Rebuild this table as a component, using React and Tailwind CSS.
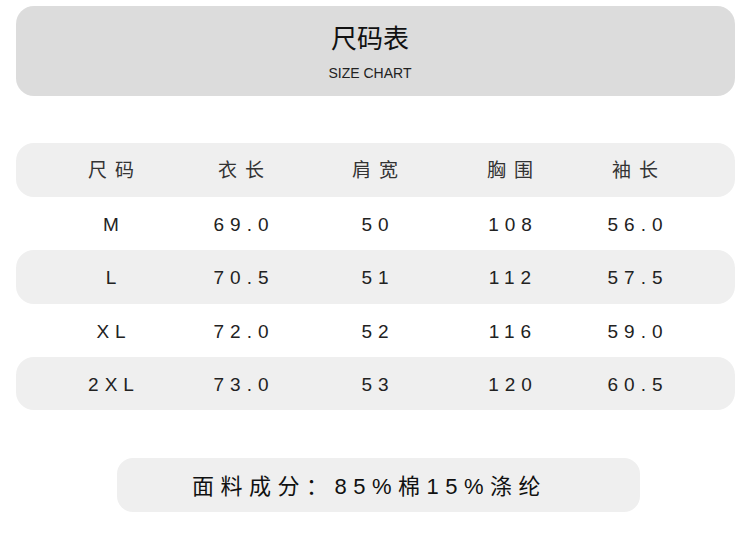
import React from "react";

const cols = ["w-[130px]", "w-[130px]", "w-[138px]", "w-[132px]", "w-[118px]"];
const rows = [
  ["M", "69.0", "50", "108", "56.0"],
  ["L", "70.5", "51", "112", "57.5"],
  ["XL", "72.0", "52", "116", "59.0"],
  ["2XL", "73.0", "53", "120", "60.5"],
];
const heights = ["h-[54px]", "h-[53px]", "h-[54px]", "h-[53px]", "h-[53px]"];

function Row({ cells, gray, head, h }) {
  return (
    <div className={`flex items-center ${h} rounded-[18px] pl-[30px] pt-[3px] ${gray ? "bg-[#efefef]" : ""}`}>
      {cells.map((c, i) => (
        <div key={i} className={`${cols[i]} flex justify-center`}>
          <span
            className={
              head
                ? "text-[19px] tracking-[8px] mr-[-8px] text-[#333]"
                : "text-[19px] tracking-[6px] mr-[-6px] text-[#222]"
            }
          >
            {c}
          </span>
        </div>
      ))}
    </div>
  );
}

export default function App() {
  return (
    <div
      className="w-[750px] h-[534px] bg-white px-[16px] pt-[6px] overflow-hidden"
      style={{ fontFamily: '"Liberation Sans", "Noto Sans CJK SC", sans-serif' }}
    >
      <div className="h-[90px] w-[719px] rounded-[18px] bg-[#dcdcdc] flex flex-col items-center pt-[17px] pr-[11px]">
        <div className="text-[26px] leading-[32px] text-[#111]">尺码表</div>
        <div className="text-[14px] leading-[16px] mt-[10px] text-[#222]">SIZE CHART</div>
      </div>
      <div className="w-[719px] mt-[47px] flex flex-col">
        <Row cells={["尺码", "衣长", "肩宽", "胸围", "袖长"]} gray head h={heights[0]} />
        {rows.map((r, i) => (
          <Row key={i} cells={r} gray={i % 2 === 1} h={heights[i + 1]} />
        ))}
      </div>
      <div className="w-[523px] h-[54px] ml-[101px] mt-[48px] rounded-[16px] bg-[#efefef] flex items-center pl-[75px] pt-[2px]">
        <span className="text-[22px] tracking-[6.5px] text-[#111]">面料成分：85%棉15%涤纶</span>
      </div>
    </div>
  );
}
